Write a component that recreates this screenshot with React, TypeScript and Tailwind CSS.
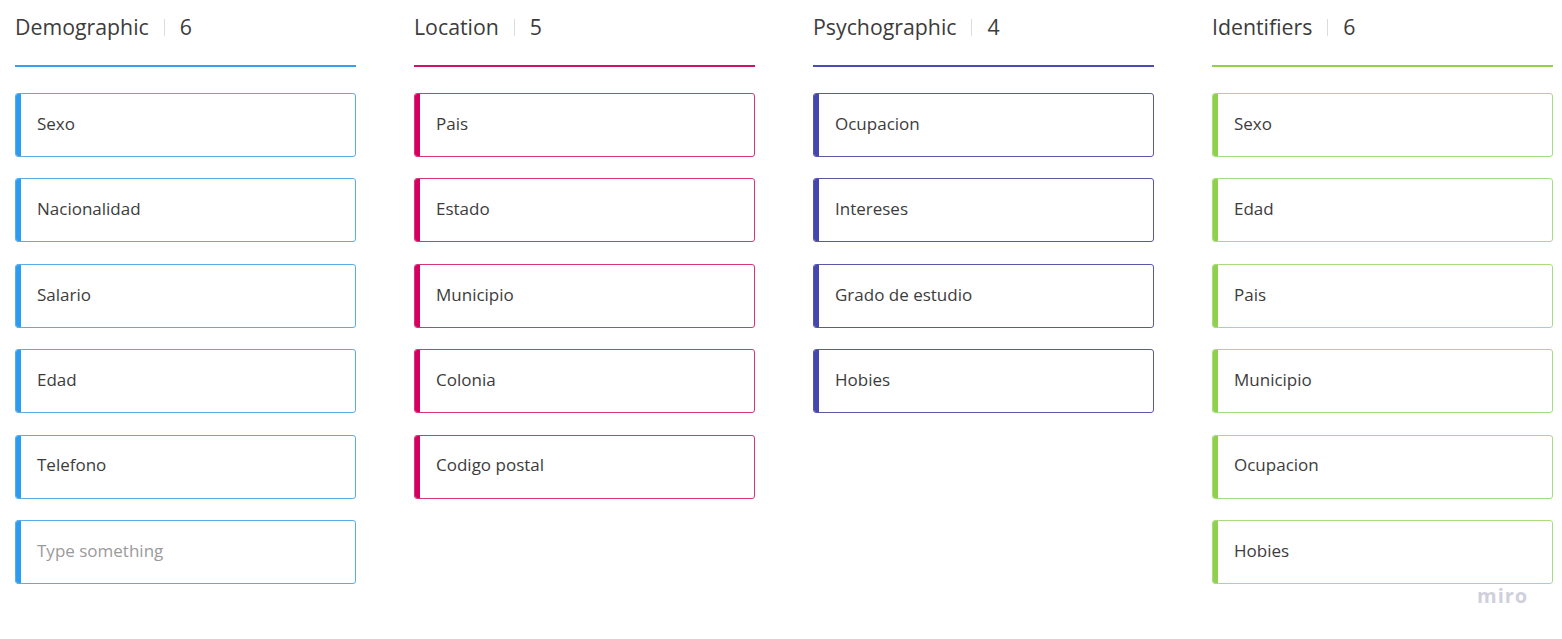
import React from 'react';

type Column = {
  title: string;
  items: string[];
  placeholder?: boolean;
  line: string;
  stripe: string;
  border: string;
};

const COLUMNS: Column[] = [
  {
    title: 'Demographic',
    items: ['Sexo', 'Nacionalidad', 'Salario', 'Edad', 'Telefono'],
    placeholder: true,
    line: 'bg-[#3a9fe6]',
    stripe: 'bg-[#2d9bf0]',
    border: 'border-[#5aaee8]',
  },
  {
    title: 'Location',
    items: ['Pais', 'Estado', 'Municipio', 'Colonia', 'Codigo postal'],
    line: 'bg-[#d3116a]',
    stripe: 'bg-[#d5005f]',
    border: 'border-[#d6357d]',
  },
  {
    title: 'Psychographic',
    items: ['Ocupacion', 'Intereses', 'Grado de estudio', 'Hobies'],
    line: 'bg-[#4d4db0]',
    stripe: 'bg-[#4646b0]',
    border: 'border-[#5858a6]',
  },
  {
    title: 'Identifiers',
    items: ['Sexo', 'Edad', 'Pais', 'Municipio', 'Ocupacion', 'Hobies'],
    line: 'bg-[#8fd14f]',
    stripe: 'bg-[#8fd14f]',
    border: 'border-[#a8dc80]',
  },
];

function Card({ text, col, muted }: { text: string; col: Column; muted?: boolean }) {
  return (
    <div className={`flex h-[64px] rounded-[3px] border ${col.border} overflow-hidden bg-white`}>
      <div className={`w-[5px] shrink-0 ${col.stripe}`} />
      <div className={`flex items-center pl-[16px] pb-[3px] text-[17px] ${muted ? 'text-[#9a9a9a]' : 'text-[#3c3c3c]'}`}>
        {text}
      </div>
    </div>
  );
}

export default function App() {
  return (
    <div
      className="relative h-[639px] w-[1562px] bg-white"
      style={{ fontFamily: '"Open Sans", "Noto Sans", sans-serif' }}
    >
      <div className="flex gap-[58px] pl-[15px] pt-[12px]">
        {COLUMNS.map(col => (
          <div key={col.title} className="w-[341px]">
            {/* header */}
            <div className="flex items-center h-[30px] text-[21.3px] text-[#3c3c3c]">
              <span>{col.title}</span>
              <span className="mx-[15px] h-[17px] w-px bg-[#dcdcdc]" />
              <span>{col.items.length + (col.placeholder ? 1 : 0)}</span>
            </div>
            <div className={`mt-[23px] h-[2px] ${col.line}`} />
            <div className="mt-[26px] flex flex-col gap-[21.4px]">
              {col.items.map(it => (
                <Card key={it} text={it} col={col} />
              ))}
              {col.placeholder && <Card text="Type something" col={col} muted />}
            </div>
          </div>
        ))}
      </div>
      <div className="absolute left-[1477px] top-[581px] text-[20px] font-bold tracking-[1px] text-[#cfd0db]">
        miro
      </div>
    </div>
  );
}
